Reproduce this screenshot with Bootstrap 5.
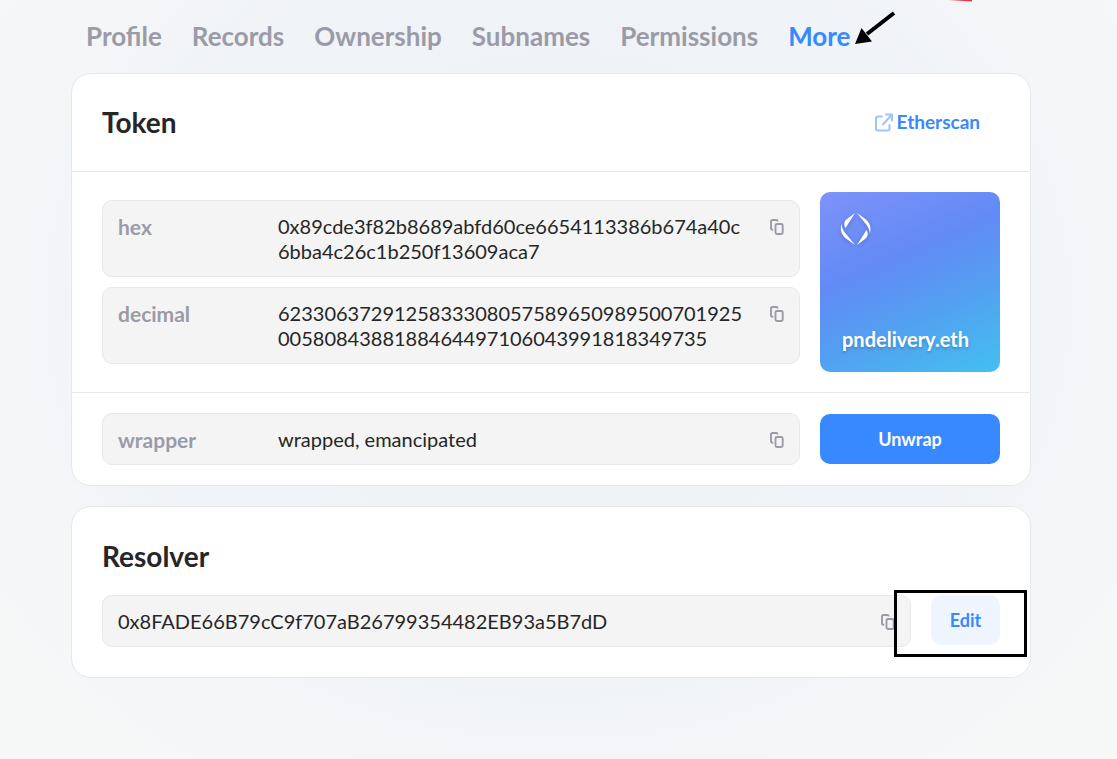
<!DOCTYPE html>
<html lang="en">
<head>
<meta charset="utf-8">
<meta name="viewport" content="width=device-width, initial-scale=1">
<title>pndelivery.eth</title>
<link href="https://cdn.jsdelivr.net/npm/bootstrap@5.3.0/dist/css/bootstrap.min.css" rel="stylesheet">
<style>
  body {
    font-family: Lato, "Liberation Sans", sans-serif;
    font-size: 20px; line-height: 25px; color: #262626;
    min-height: 100vh; padding-right: 15px;
    background: radial-gradient(60% 75% at 50% 40%, #eef1f7 0%, #f0f3f7 60%, #f6f7f7 100%) #f6f7f7;
  }
  .page { max-width: 960px; }
  .tabs { gap: 30px; padding: 20px 15px 21px; font-size: 26px; line-height: 32px; font-weight: 700; }
  .tabs a { color: #9b9ba7; text-decoration: none; }
  .tabs a.active { color: #3889ff; }
  .pointer { position: absolute; left: 100%; top: -10px; margin-left: 3px; }
  .scribble { position: absolute; top: 0; left: 878px; }
  .panel { background: #fff; border: 1px solid #e8e8e8; border-radius: 20px; }
  .panel h2 { font-size: 28px; line-height: 38px; font-weight: 700; margin: 0; }
  .panel-head { padding: 29px 50px 30px 30px; }
  .panel-body { padding: 30px; }
  .panel-row { gap: 20px; }
  .field-list { gap: 10px; }
  .section { padding: 20px 30px; border-top: 1px solid #e8e8e8; }
  .field { background: #f4f4f4; border: 1px solid #e8e8e8; border-radius: 10px; padding: 13px 15px 12px; }
  .field-name { width: 160px; color: #9b9ba7; font-size: 21px; font-weight: 700; flex: none; }
  .copy { border: 0; background: none; padding: 5px 0 3px; color: #9b9ba7; line-height: 0; flex: none; align-self: flex-start; }
  .side { width: 180px; flex: none; }
  .nft { height: 180px; border-radius: 10px; padding: 20px;
    background: linear-gradient(156deg, #7f92fa 0%, #628af5 38%, #53a0f1 65%, #43c0f0 100%);
    color: #fff; font-weight: 700; text-shadow: 0 2px 3px rgba(0,0,0,.2); }
  .nft-name { padding: 0 2px; }
  .nft svg { filter: drop-shadow(0 1px 2px rgba(0,0,0,.2)); }
  .act { height: 50px; border-radius: 10px; font-size: 18px; font-weight: 700; }
  .act-main, .act-main:hover { background: #3889ff; color: #fff; }
  .act-soft, .act-soft:hover { background: #eef5ff; color: #3889ff; width: 69px; padding: 0; flex: none; }
  .scan { color: #3889ff; text-decoration: none; font-size: 19px; line-height: 24px; font-weight: 700; }
  .marker { position: absolute; right: -27px; top: -1px; width: 133px; height: 67px; border: 3px solid #000; pointer-events: none; }
</style>
</head>
<body>
<svg width="0" height="0" class="position-absolute" aria-hidden="true">
  <symbol id="copy" viewBox="0 0 14 16"><g fill="none" stroke="currentColor" stroke-width="1.9"><path d="M3.2 10.7H2.4Q1 10.7 1 9.3V2.4Q1 1 2.4 1H6.2Q7.6 1 7.6 2.4"/><rect x="5.5" y="5" width="7.2" height="10" rx="1.5"/></g></symbol>
</svg>
<div class="page mx-auto position-relative">
  <svg class="scribble" width="24" height="2" viewBox="0 0 24 2" aria-hidden="true"><path d="M0 0H23V1.6Z" fill="#f0304a"/></svg>
  <nav class="tabs d-flex" aria-label="Name sections">
    <a href="#profile">Profile</a>
    <a href="#records">Records</a>
    <a href="#ownership">Ownership</a>
    <a href="#subnames">Subnames</a>
    <a href="#permissions">Permissions</a>
    <a href="#more" class="active position-relative" aria-current="page">More<svg class="pointer" width="44" height="38" viewBox="0 0 44 38" aria-hidden="true"><path d="M41 3L14 24" stroke="#000" stroke-width="4"/><path d="M2 34L8.500 18L19 31.500Z"/></svg></a>
  </nav>
  <main class="d-flex flex-column panel-row">
    <section class="panel">
      <div class="panel-head d-flex justify-content-between align-items-center">
        <h2>Token</h2>
        <a class="scan d-flex align-items-center gap-1" href="#etherscan"><svg width="19" height="19" viewBox="0 0 19 19" fill="none" stroke="#9cc4ff" stroke-width="2" stroke-linecap="round" stroke-linejoin="round" aria-hidden="true"><path d="M8 3.500H4Q2 3.500 2 5.500V15.500Q2 17.500 4 17.500H13.500Q15.500 17.500 15.500 15.500V12M12 1.500H18V7.500M17 2.500L9 11.500"/></svg>Etherscan</a>
      </div>
      <div class="section panel-row d-flex align-items-center">
        <div class="field-list flex-grow-1 d-flex flex-column">
          <div class="field d-flex"><div class="field-name">hex</div><div class="flex-grow-1">0x89cde3f82b8689abfd60ce6654113386b674a40c<wbr>6bba4c26c1b250f13609aca7</div><button class="copy" aria-label="Copy hex"><svg width="14" height="16"><use href="#copy"/></svg></button></div>
          <div class="field d-flex"><div class="field-name">decimal</div><div class="flex-grow-1">6233063729125833308057589650989500701925<wbr>0058084388188464497106043991818349735</div><button class="copy" aria-label="Copy decimal"><svg width="14" height="16"><use href="#copy"/></svg></button></div>
        </div>
        <div class="side nft d-flex flex-column justify-content-between">
          <svg width="32" height="34" viewBox="0 0 32 34" fill="#fff" aria-hidden="true"><path d="M15 1L5.500 16C3.500 13 4 9 7 7ZM1.500 12C2 17 4 20 7 23L15 33L6 26.500C1 22.500 0 17 1.500 12ZM17 1L26 7.500C31 12 31 17 30 22C29.500 17 28 14.500 25 11ZM17 33L26.500 18C28.500 21 28 25 25 27Z"/></svg>
          <div class="nft-name">pndelivery.eth</div>
        </div>
      </div>
      <div class="section panel-row d-flex align-items-center">
        <div class="field d-flex flex-grow-1"><div class="field-name">wrapper</div><div class="flex-grow-1">wrapped, emancipated</div><button class="copy" aria-label="Copy wrapper"><svg width="14" height="16"><use href="#copy"/></svg></button></div>
        <button class="btn act act-main side">Unwrap</button>
      </div>
    </section>
    <section class="panel panel-body">
      <h2>Resolver</h2>
      <div class="panel-row d-flex align-items-start position-relative mt-3 pt-1">
        <div class="field d-flex flex-grow-1"><div class="flex-grow-1">0x8FADE66B79cC9f707aB26799354482EB93a5B7dD</div><button class="copy" aria-label="Copy resolver"><svg width="14" height="16"><use href="#copy"/></svg></button></div>
        <button class="btn act act-soft">Edit</button>
        <div class="marker"></div>
      </div>
    </section>
  </main>
</div>
<script src="https://cdn.jsdelivr.net/npm/bootstrap@5.3.0/dist/js/bootstrap.bundle.min.js"></script>
</body>
</html>
